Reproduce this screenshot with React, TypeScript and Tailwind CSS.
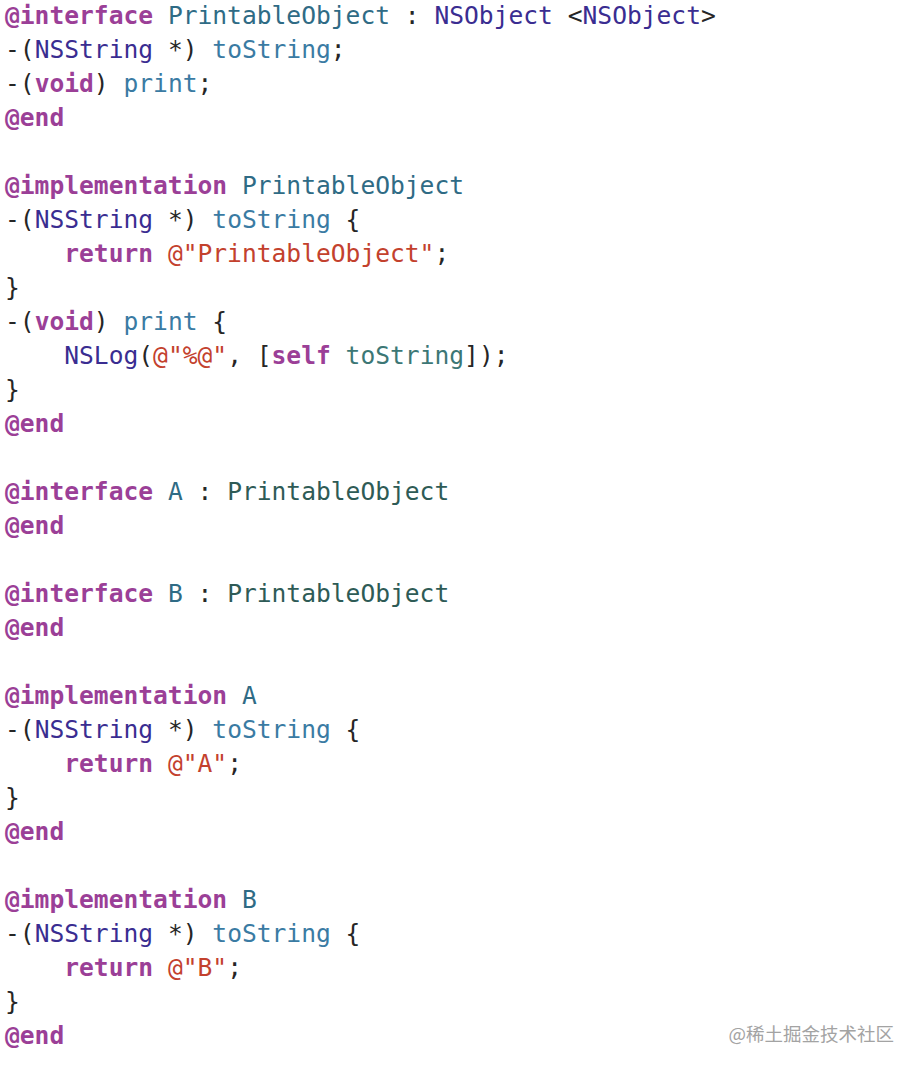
type Tok = [string, string?];

const kw = "text-[#9b3f97] font-bold";
const cls = "text-[#3a2d91]";
const decl = "text-[#2f6b85]";
const meth = "text-[#3a7ba3]";
const sup = "text-[#2e5b56]";
const call = "text-[#3c7775]";
const str = "text-[#c3412d]";

const lines: Tok[][] = [
  [["@interface", kw], [" "], ["PrintableObject", decl], [" : "], ["NSObject", cls], [" <"], ["NSObject", cls], [">"]],
  [["-("], ["NSString", cls], [" *) "], ["toString", meth], [";"]],
  [["-("], ["void", kw], [") "], ["print", meth], [";"]],
  [["@end", kw]],
  [],
  [["@implementation", kw], [" "], ["PrintableObject", decl]],
  [["-("], ["NSString", cls], [" *) "], ["toString", meth], [" {"]],
  [["    "], ["return", kw], [" "], ['@"PrintableObject"', str], [";"]],
  [["}"]],
  [["-("], ["void", kw], [") "], ["print", meth], [" {"]],
  [["    "], ["NSLog", cls], ["("], ['@"%@"', str], [", ["], ["self", kw], [" "], ["toString", call], ["]);"]],
  [["}"]],
  [["@end", kw]],
  [],
  [["@interface", kw], [" "], ["A", decl], [" : "], ["PrintableObject", sup]],
  [["@end", kw]],
  [],
  [["@interface", kw], [" "], ["B", decl], [" : "], ["PrintableObject", sup]],
  [["@end", kw]],
  [],
  [["@implementation", kw], [" "], ["A", decl]],
  [["-("], ["NSString", cls], [" *) "], ["toString", meth], [" {"]],
  [["    "], ["return", kw], [" "], ['@"A"', str], [";"]],
  [["}"]],
  [["@end", kw]],
  [],
  [["@implementation", kw], [" "], ["B", decl]],
  [["-("], ["NSString", cls], [" *) "], ["toString", meth], [" {"]],
  [["    "], ["return", kw], [" "], ['@"B"', str], [";"]],
  [["}"]],
  [["@end", kw]],
];

export default function App() {
  return (
    <div className="relative h-[1070px] w-[922px] overflow-hidden bg-white">
      <pre
        className="-mt-px pl-[5px] text-[24.6px] leading-[34px] text-[#262626]"
        style={{ fontFamily: '"DejaVu Sans Mono", "Liberation Mono", monospace' }}
      >
        {lines.map((line, i) => (
          <div key={i} className="h-[34px] whitespace-pre">
            {line.map(([t, c], j) => (
              <span key={j} className={c}>
                {t}
              </span>
            ))}
          </div>
        ))}
      </pre>
      {/* watermark */}
      <div
        className="absolute right-[28px] top-[1020px] text-[18.5px] leading-[26px] text-[#a3a3a3]"
        style={{ fontFamily: '"Noto Sans CJK SC", "Noto Sans", sans-serif' }}
      >
        @稀土掘金技术社区
      </div>
    </div>
  );
}
